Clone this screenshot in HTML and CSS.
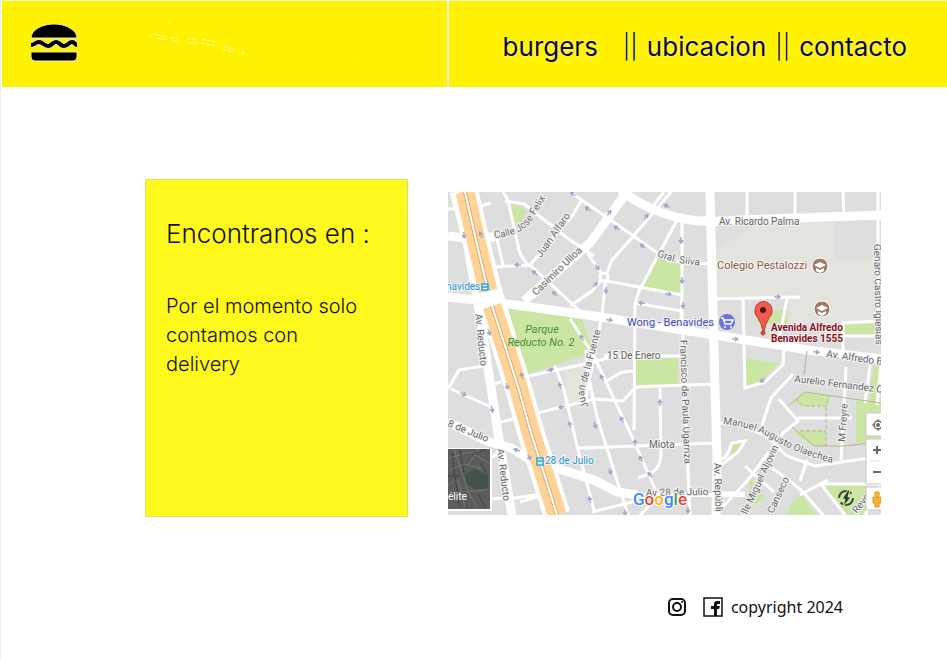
FILE: index.html
```html
<!DOCTYPE html>
<html lang="es">
<head>
<meta charset="utf-8">
<meta name="viewport" content="width=device-width, initial-scale=1">
<title>Ubicacion</title>
<link rel="stylesheet" href="styles.css">
</head>
<body>
<div class="page">
<header class="header">
  <div class="brand">
    <a href="#" class="logo" aria-label="Inicio">
      <svg width="48" height="40" viewBox="0 0 48 40">
        <g stroke="#e9e9c8" stroke-width="1" fill="#000">
          <path d="M1 15C1 7 12 1 24 1s23 6 23 14z"/>
          <path d="M1 29h46v5q0 4-4 4H5q-4 0-4-4z"/>
        </g>
        <path d="M1 22c4 0 4-3 8-3s5 4 9 4 4-4 8-4 4 4 8 4 5-4 8-4 3 3 5 3" fill="none" stroke="#e9e9c8" stroke-width="6"/>
        <path d="M1 22c4 0 4-3 8-3s5 4 9 4 4-4 8-4 4 4 8 4 5-4 8-4 3 3 5 3" fill="none" stroke="#000" stroke-width="4"/>
      </svg>
    </a>
    <svg class="sketch" width="220" height="50" viewBox="145 15 220 50" fill="none" stroke="#fffcb0">
      <path d="M148 35l3 1m2-2l12 3m-9 1l9 2m5-2h7m-6 3h7m8-2h10m-9 4h10m4-4l13 3m-14 1l15 3m7 0l12 4m-13-1l12 3m7-1l6 3m-4-3v4m-73-33v2m189 38h1" stroke-dasharray="4 1"/>
    </svg>
  </div>
  <nav class="nav">
    <a href="#" class="first">burgers</a><span>||</span><a href="#">ubicacion</a><span>||</span><a href="#">contacto</a>
  </nav>
</header>
<main class="main">
  <section class="card">
    <h1>Encontranos en :</h1>
    <p>Por el momento solo contamos con delivery</p>
  </section>
  <svg class="map" viewBox="448 192 433 323" role="img" aria-label="Mapa">
    <defs>
      <path id="arrow" d="M-3 0H3M0-2L3 0L0 2" fill="none" stroke="#a3a5ca" stroke-width="1.4"/>
      <path id="silva" d="M657 256Q675 264 705 266"/>
      <path id="felix" d="M494 238Q522 237 534 217L555 182"/>
      <path id="olae" d="M723 424Q753 427 774 440T836 464"/>
      <path id="fuente" d="M589 406Q580 395 588 378L603 322"/>
    </defs>
    <rect x="448" y="192" width="433" height="323" fill="#dedede"/>
    <path fill="#e3e4de" d="M716 251L755 224L835 222V260H874V324H790V297H716zM565 370L585 365L588 399L566 403z"/>
    <path fill="#cbe6a3" d="M507 199L526 210L519 228L512 224zM504 306L582 319L594 352L524 375zM657 255L681 262V295L639 289zM636 360L678 358V385L636 386zM756 312L787 310V324L755 323zM844 323L881 321V334H844zM745 358L779 363L757 384L745 388zM794 402L805 392L829 396V405L804 407zM793 432L800 430H826V446H814zM856 400L881 403V442L856 443zM873 366L879 367L876 403H869zM732 443L745 444L731 458zM750 477L765 498L748 508zM823 484L866 484L865 515H843zM789 506L802 494L816 515H787z"/>
    <g class="roads">
      <path class="minor" d="M448 209H457M475 208L491 203M503 192L508 200L519 250Q522 260 530 266M505 201L524 204L570 240L594 256M570 192L592 207L669 261L711 264M582 199L573 215L560 230L530 265L580 311M497 239L503 265M493 267L530 265M588 254L604 277L592 291L570 306M607 281L682 295V222M677 220L639 291L635 304L634 430M671 192L630 240L612 260L606 275L602 315L585 403M664 192L650 210M635 303L682 311L684 380L690 515M682 295L681 320M711 299L800 297M787 299L777 348M743 299L745 388L765 382L783 365L784 351M747 192V218M795 192V218M843 192L844 216M878 192V320M843 350V323L881 321M843 336H881M448 389L459 370L483 366M451 389L491 407M492 384L594 362L617 355M497 423L594 399L623 401L636 387L660 386L716 384M570 319L594 356L633 439L660 500M586 350Q587 375 598 420L628 515M555 366L564 390L578 450L594 510M578 448H594M580 448L716 443M660 388L661 455Q660 470 649 474L638 478M605 382L622 372L634 371M604 356H682M718 423L735 424L765 435L787 456L815 466Q850 461 881 456M846 367L841 460M797 418L852 418M881 366L877 405M870 365L865 403M793 374L771 398L762 425M779 399L798 421L783 433L748 480L715 515M766 464L789 480L803 492L823 515M807 460L800 481M800 495L828 480M821 484L845 515M821 484H881L865 515M717 458Q724 461 728 453L732 443L745 441L738 452L720 466M717 493H745M745 466L774 492M448 500L515 498L542 494M492 458L506 444M655 500L640 515M520 502L560 490M592 512L640 500"/>
      <path class="mid" d="M620 190Q635 201 650 208T685 219T740 220L881 215M448 236L465 238L495 237M627 192L590 243L524 301M448 297L501 303L594 316L740 339L808 350L881 359M710 192L714 350L717 460L716 515M454 192L466 236L479 309L497 427L512 515M448 422L487 441L511 448L531 460L594 480L617 492L637 495"/>
      <path class="small-mid" d="M637 495H745"/>
      <path class="edge" d="M465 192L475 236L487 286L507 352L519 390L531 433L542 467L557 515"/>
      <path class="express" d="M465 192L475 236L488 291M492 306L507 352L519 390L531 433L542 467L557 515"/>
      <path class="median" d="M465 192L475 236L488 291M492 306L507 352L519 390L531 433L542 467L557 515"/>
      <path class="median-line" d="M465 192L475 236L488 291M492 306L507 352L519 390L531 433L542 467L557 515"/>
      <path class="trail" d="M807 351L804 375M788 406L805 392L881 403M792 427L814 446H844L880 442"/>
      <path class="trail dash" d="M796 399L803 406H826L829 396M826 407V446M800 431H825"/>
    </g>
    <circle cx="604" cy="277" r="4" fill="#ddd" stroke="#fff" stroke-width="3"/>
    <g>
      <use href="#arrow" transform="translate(464 235) rotate(85)"/><use href="#arrow" transform="translate(481 235) rotate(-110)"/>
      <use href="#arrow" transform="translate(518 265) rotate(185)"/><use href="#arrow" transform="translate(535 273) rotate(220)"/>
      <use href="#arrow" transform="translate(555 294) rotate(225)"/><use href="#arrow" transform="translate(573 194) rotate(215)"/>
      <use href="#arrow" transform="translate(588 209) rotate(215)"/><use href="#arrow" transform="translate(609 213) rotate(-55)"/>
      <use href="#arrow" transform="translate(617 228) rotate(215)"/><use href="#arrow" transform="translate(646 217) rotate(-55)"/>
      <use href="#arrow" transform="translate(667 206) rotate(205)"/><use href="#arrow" transform="translate(643 246) rotate(215)"/>
      <use href="#arrow" transform="translate(681 240) rotate(90)"/><use href="#arrow" transform="translate(682 280) rotate(90)"/>
      <use href="#arrow" transform="translate(683 305) rotate(90)"/><use href="#arrow" transform="translate(668 294) rotate(8)"/>
      <use href="#arrow" transform="translate(642 303) rotate(188)"/><use href="#arrow" transform="translate(597 267) rotate(50)"/>
      <use href="#arrow" transform="translate(595 285) rotate(-45)"/><use href="#arrow" transform="translate(606 290) rotate(95)"/>
      <use href="#arrow" transform="translate(609 320) rotate(8)"/><use href="#arrow" transform="translate(735 339) rotate(8)"/>
      <use href="#arrow" transform="translate(777 297)"/><use href="#arrow" transform="translate(816 352) rotate(8)"/>
      <use href="#arrow" transform="translate(489 332) rotate(70)"/><use href="#arrow" transform="translate(582 338) rotate(-120)"/>
      <use href="#arrow" transform="translate(463 394) rotate(25)"/><use href="#arrow" transform="translate(492 409) rotate(80)"/>
      <use href="#arrow" transform="translate(507 386) rotate(75)"/><use href="#arrow" transform="translate(522 376) rotate(-105)"/>
      <use href="#arrow" transform="translate(550 370) rotate(-15)"/><use href="#arrow" transform="translate(560 386) rotate(-105)"/>
      <use href="#arrow" transform="translate(562 407) rotate(165)"/><use href="#arrow" transform="translate(570 425) rotate(-105)"/>
      <use href="#arrow" transform="translate(517 450) rotate(195)"/><use href="#arrow" transform="translate(529 457) rotate(65)"/>
      <use href="#arrow" transform="translate(590 500) rotate(-105)"/><use href="#arrow" transform="translate(602 378) rotate(-115)"/>
      <use href="#arrow" transform="translate(622 420) rotate(-115)"/><use href="#arrow" transform="translate(635 443) rotate(-90)"/>
      <use href="#arrow" transform="translate(641 459) rotate(-120)"/><use href="#arrow" transform="translate(650 475) rotate(-130)"/>
      <use href="#arrow" transform="translate(660 403) rotate(-90)"/><use href="#arrow" transform="translate(595 425) rotate(75)"/>
      <use href="#arrow" transform="translate(610 471) rotate(75)"/><use href="#arrow" transform="translate(625 512) rotate(75)"/>
      <use href="#arrow" transform="translate(688 510) rotate(90)"/><use href="#arrow" transform="translate(763 380) rotate(140)"/>
    </g>
    <g class="labels">
      <text><textPath href="#felix">Calle Jose Felix</textPath></text>
      <text transform="translate(541 258) rotate(-55)">Juan Alfaro</text>
      <text transform="translate(536 296) rotate(-44)">Casimiro Ulloa</text>
      <text><textPath href="#silva">Gral. Silva</textPath></text>
      <text x="719" y="225">Av. Ricardo Palma</text>
      <text transform="translate(874 244) rotate(89)">Genaro Castro Iglesias</text>
      <text transform="translate(475 314) rotate(84)">Av. Reducto</text>
      <text transform="translate(497 449) rotate(83)">Av. Reducto</text>
      <text><textPath href="#fuente">Juan de la Fuente</textPath></text>
      <text x="607" y="359">15 De Enero</text>
      <text transform="translate(680 340) rotate(88)">Francisco de Paula Ugarriza</text>
      <text x="649" y="448">Miota</text>
      <text x="646" y="496" transform="rotate(-1 646 496)">Av 28 de Julio</text>
      <text transform="translate(447 426) rotate(22)">8 de Julio</text>
      <text transform="translate(714 463) rotate(88)">Av. Repúbli</text>
      <text><textPath href="#olae">Manuel Augusto Olaechea</textPath></text>
      <text transform="translate(747 515) rotate(-65)">lle Miguel Aljovin</text>
      <text transform="translate(773 514) rotate(-65)">Canseco</text>
      <text transform="translate(845 442) rotate(-86)">M Freyre</text>
      <text transform="translate(794 382) rotate(7)">Aurelio Fernandez C</text>
      <text transform="translate(826 357) rotate(8)">Av. Alfredo B</text>
      <text transform="translate(857 514) rotate(-52)">Reve</text>
      <text class="park" x="542" y="333" text-anchor="middle">Parque</text>
      <text class="park" x="541" y="346" text-anchor="middle">Reducto No. 2</text>
      <text class="station" x="446" y="290">navides</text>
      <text class="station" x="545" y="464">28 de Julio</text>
      <text class="school" x="717" y="269">Colegio Pestalozzi</text>
      <text class="shop" x="627" y="326">Wong - Benavides</text>
      <text class="address" x="771" y="331">Avenida Alfredo</text>
      <text class="address" x="771" y="342">Benavides 1555</text>
    </g>
    <g fill="#e9f8ff" stroke="#28a9df" stroke-width="1.5"><path d="M482 284h6v6h-6zM537 458h6v7h-6zM482 287h6M537 461h6"/></g>
    <g fill="#a17c62" stroke="#fff"><circle cx="820" cy="266" r="8"/><circle cx="822" cy="309" r="8"/></g>
    <path fill="#fff" d="M814 265l6-3 6 3-6 3zM816 268l4 2 4-2v3l-4 2-4-2zM816 308l6-3 6 3-6 3zM818 311l4 2 4-2v3l-4 2-4-2z"/>
    <circle cx="727" cy="322" r="8" fill="#6975dd"/>
    <path d="M721 318h2l2 6h6l2-4h-9" fill="none" stroke="#fff" stroke-width="1.5"/><circle cx="725" cy="327" r="1" fill="#fff"/><circle cx="731" cy="327" r="1" fill="#fff"/>
    <path d="M763 332Q762 324 758 318Q754 314 755 310A8.500 8.500 0 0 1 772 310Q773 314 769 318Q765 324 764 332z" fill="#f25b50" stroke="#b93b35"/>
    <circle cx="763" cy="310" r="3" fill="#5c1010"/><circle cx="763" cy="333" r="2" fill="#e64640" stroke="#b93b35"/>
    <path d="M448 448H492V511H448z" fill="#fff"/><path d="M448 449H490V509H448z" fill="#5b5d5b"/>
    <path d="M465 474L475 469 488 476V489H475L466 483z" fill="#43534a"/>
    <g class="aerial"><path d="M449 458L470 452L489 463M454 449L469 493L477 508M449 470L465 464L482 469M448 485L458 480L465 507M469 464L479 449M466 492L489 489M450 497L462 493"/><path class="shade" d="M452 453L459 506M460 450L464 473M478 494L486 508M448 476H460M472 455L487 449M481 463L487 475"/></g>
    <text class="sat" x="448" y="500">élite</text>
    <text class="google" x="633" y="505"><tspan fill="#4285f4">G</tspan><tspan fill="#ea4335">o</tspan><tspan fill="#fbbc05">o</tspan><tspan fill="#4285f4">g</tspan><tspan fill="#34a853">l</tspan><tspan fill="#ea4335">e</tspan></text>
    <circle cx="846" cy="498" r="7" fill="none" stroke="#424b3c" stroke-width="2" stroke-dasharray="17 5"/><path d="M848 490L842 499H845L843 507L851 497H848L850 490z" fill="#303b2b" stroke="#cbe6a3"/>
    <path class="control" d="M866 413H890V436H866zM866 439H890V484H866zM866 487H890V510H866z"/>
    <path d="M870 461H881" stroke="#ddd"/>
    <circle cx="878" cy="425" r="4" fill="none" stroke="#666" stroke-width="1.500"/><circle cx="878" cy="425" r="2" fill="#666"/><path d="M878 419V422M878 428V431M872 425H875" stroke="#666"/>
    <path d="M873 450H881M877 446V454M873 472H881" stroke="#666" stroke-width="2"/>
    <circle cx="877" cy="494" r="3" fill="#f6b32f"/><path d="M873 497H881V503H879V507H875V503H873z" fill="#f6b32f" stroke="#dc9320"/>
  </svg>
</main>
<footer class="footer">
  <a href="#" aria-label="Instagram"><svg width="20" height="20" viewBox="0 0 20 20" fill="none" stroke="#111" stroke-width="2"><rect x="2" y="2" width="16" height="16" rx="4"/><circle cx="10" cy="10" r="4"/><circle cx="15" cy="5" r="1" fill="#111" stroke="none"/></svg></a>
  <a href="#" aria-label="Facebook"><svg width="20" height="20" viewBox="0 0 20 20"><rect x="1" y="1" width="18" height="18" fill="none" stroke="#111" stroke-width="1.500"/><path d="M11 19V12H8V9H11V7Q11 4 14 4H17V7H15Q14 7 14 8V9H17L16 12H14V19z" fill="#111"/></svg></a>
  <span>copyright 2024</span>
</footer>
</div>
</body>
</html>
```
FILE: styles.css
```css
* { box-sizing: border-box; }
body { margin: 0; background: #fff; color: #111; font-family: Inter, "Liberation Sans", sans-serif; font-weight: 300; }
a { color: inherit; text-decoration: none; }
svg { display: block; }
.page { min-height: 100vh; padding-left: 1px; border-left: 1px solid #f0f0f0; }
.header { display: grid; grid-template-columns: 445fr 499fr; gap: 2px; border-top: 1px solid #eee; background: #eee; }
.brand, .nav { display: flex; align-items: center; height: 86px; background: #fff200; }
.brand { gap: 68px; padding: 0 0 2px 28px; }
.sketch { margin-bottom: 6px; min-width: 0; }
.nav { justify-content: flex-end; gap: 9px; padding: 4px 40px 0 0; color: #0c0c22; font-size: 26px; font-weight: 400; white-space: nowrap; text-shadow: 0 0 2px #fff; }
.nav span { font-size: 24px; font-weight: 300; }
.nav .first { margin-right: 16px; }
.main { display: flex; align-items: flex-start; gap: 40px; padding: 92px 66px 0 143px; }
.card { flex: 0 0 263px; min-width: 0; min-height: 338px; padding: 36px 36px 36px 20px; border: 1px solid #dede72; background: #fff81c; }
.card h1 { margin: 0 0 40px; font-size: 26px; line-height: 36px; font-weight: 300; white-space: nowrap; }
.card p { margin: 0; font-size: 20px; line-height: 29px; }
.map { flex: 1; min-width: 0; margin-top: 13px; overflow: hidden; }
.footer { display: flex; justify-content: flex-end; align-items: center; gap: 16px; padding: 78px 104px 40px 0; font-family: "Noto Sans", sans-serif; font-size: 16px; font-weight: 400; line-height: 24px; }
.footer span { margin-left: -8px; }
.roads path { fill: none; stroke: #fff; }
.roads .minor { stroke-width: 3; }
.roads .mid { stroke-width: 9; }
.roads .small-mid { stroke-width: 4; }
.roads .edge { stroke-width: 27; }
.roads .express { stroke: #ffd397; stroke-width: 19; }
.roads .median { stroke: #d9ad70; stroke-width: 4; }
.roads .median-line { stroke-width: 2; }
.roads .trail { stroke: #b9b28d; stroke-width: 1; }
.roads .dash { stroke-dasharray: 4 2; }
.aerial { fill: none; stroke: #777975; }
.aerial .shade { stroke: #383b39; stroke-dasharray: 3 1; }
.labels { font-family: Roboto, sans-serif; font-size: 10px; font-weight: 400; fill: #686868; stroke: #f4f4f4; stroke-width: 2px; paint-order: stroke; }
.park { font-size: 11px; font-style: italic; fill: #4d8f2d; stroke: #cbe6a3; }
.station { fill: #2798d0; }
.school { font-size: 11px; fill: #8b5d42; }
.shop { font-size: 11px; fill: #424bc5; }
.address { font-weight: 700; fill: #8e0d18; }
.sat { font: 10px Roboto, sans-serif; fill: #fff; }
.google { font: 500 17px Roboto, sans-serif; stroke: #fff; stroke-width: 2px; paint-order: stroke; }
.control { fill: #fff; stroke: #c8c8c8; stroke-width: 1; }
```
